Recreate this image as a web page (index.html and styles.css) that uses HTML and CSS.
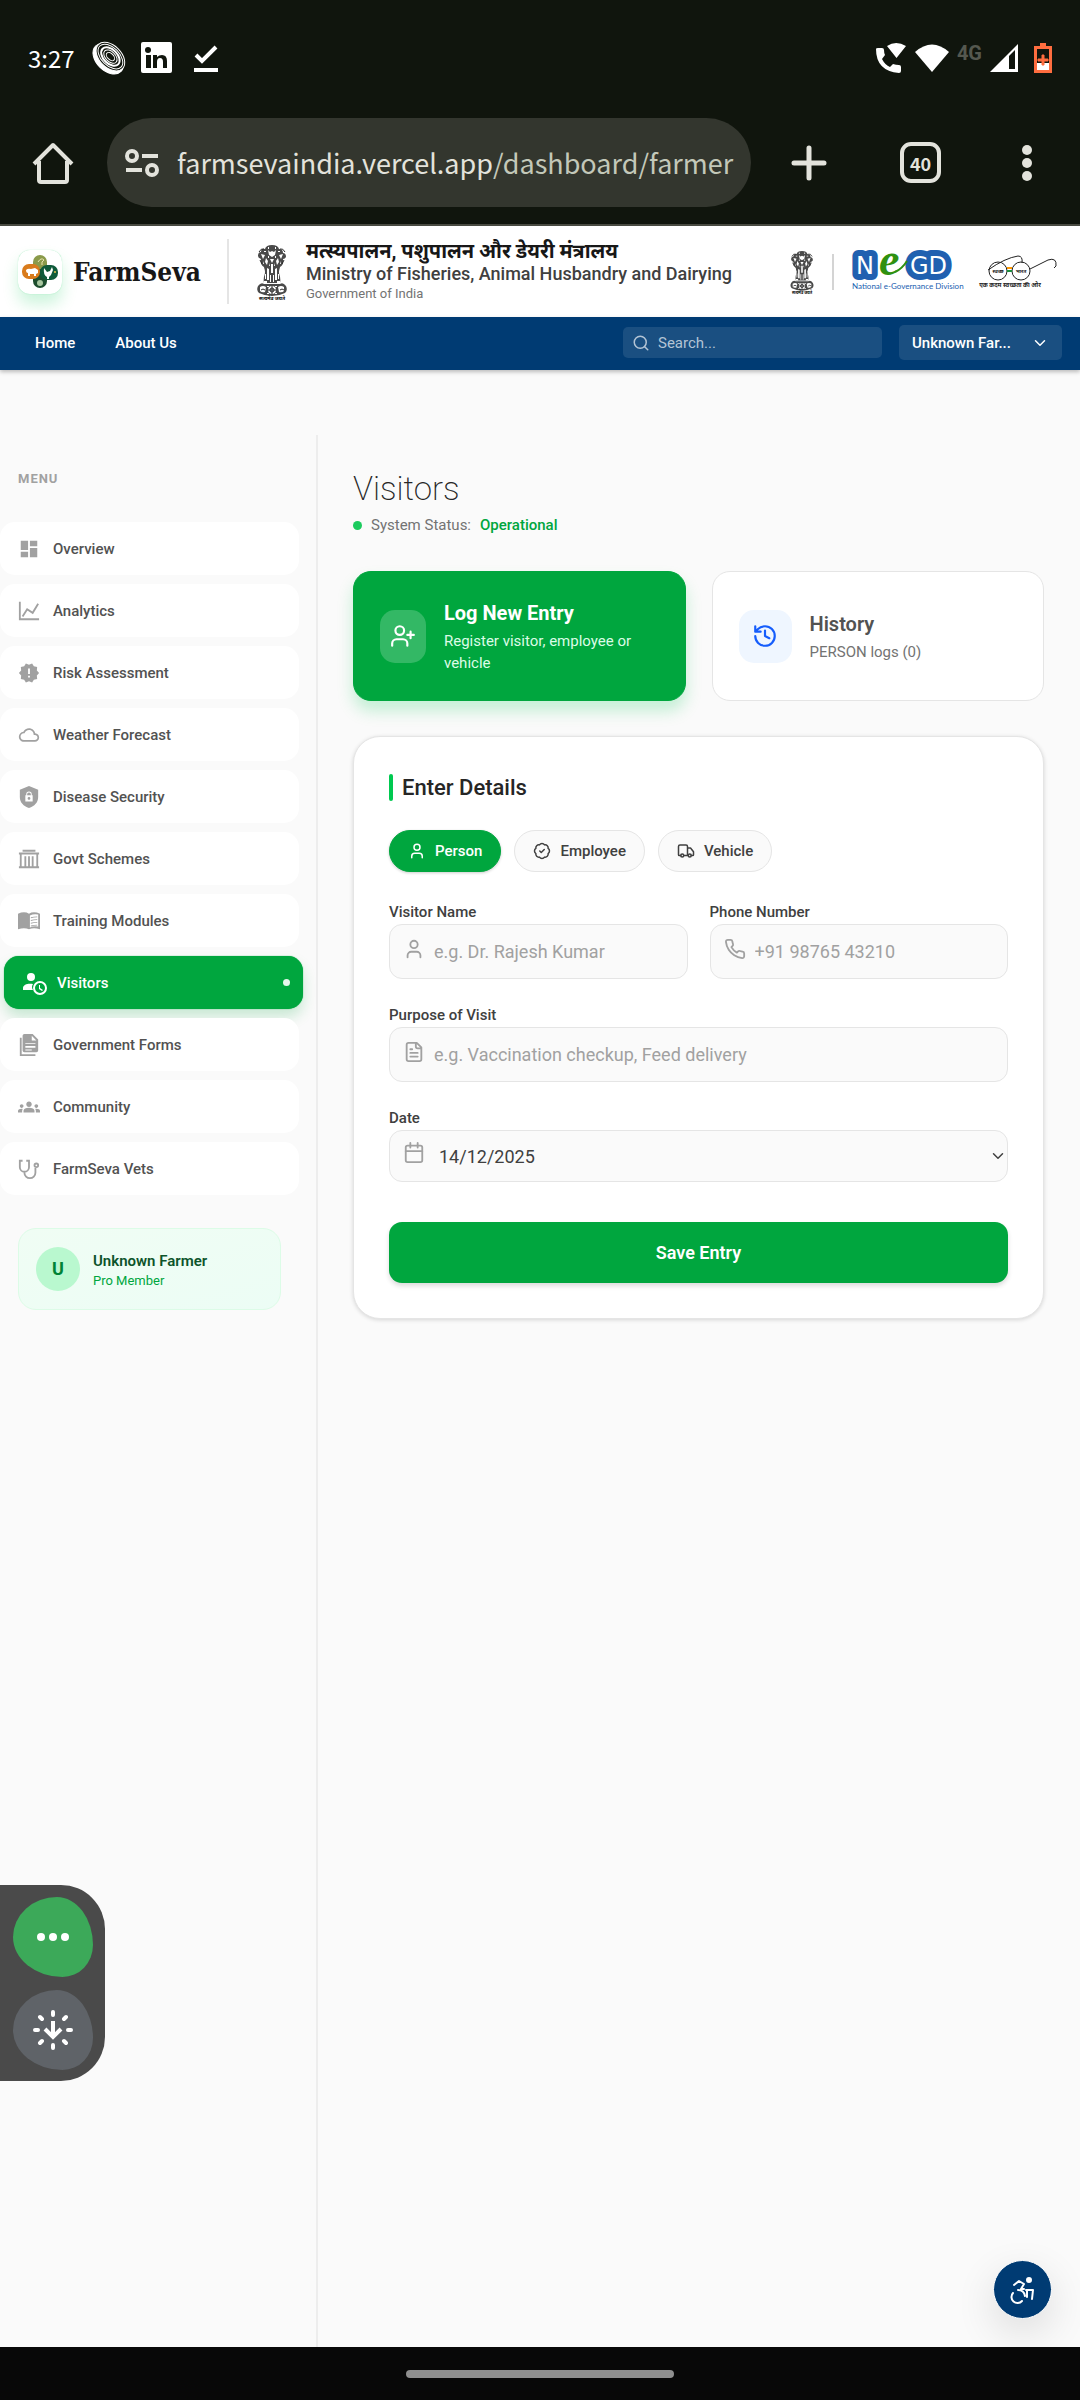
FILE: index.html
```html
<!DOCTYPE html>
<html lang="en">
<head>
    <meta charset="UTF-8">
    <meta name="viewport" content="width=device-width, initial-scale=1.0">
    <title>FarmSeva - Visitors</title>
    <link rel="stylesheet" href="styles.css">
</head>
<body>

    <!-- icons used more than once -->
    <svg class="sprite" aria-hidden="true">
        <symbol id="i-user" viewBox="0 0 24 24">
            <path d="M19 21v-2a4 4 0 0 0-4-4H9a4 4 0 0 0-4 4v2"/><circle cx="12" cy="7" r="4"/>
        </symbol>
        <symbol id="i-chevron" viewBox="0 0 24 24"><path d="m6 9 6 6 6-6"/></symbol>
        <symbol id="i-emblem" viewBox="0 0 36 56">
            <g fill="#4a4a4a">
                <path d="M11 5q1-4 7-4t7 4q4 0 4 4 3 0 3 4-1 2-3 2 1 6-3 8l-1 6q2 6 1 10H10q-1-4 1-10l-1-6q-4-2-3-8-3-1-3-3 0-4 3-4 0-4 4-3z"/>
                <path d="M4 42q3-4 6-2h16q3-2 6 2 2 4-1 7-6 3-13 3T5 49q-3-3-1-7z"/>
            </g>
            <g fill="#fff">
                <path d="M14 6l2 2 2-1 2 1 2-2-1 5-3 2-3-2zM7 10l4 1-2 4zM29 10l-4 1 2 4zM12 14l2 3-1 4-2-3zM24 14l-2 3 1 4 2-3zM16 15h4l-2 4zM17 20h2v9h-2zM13 24l2 1v11h-2zM21 25l2-1v12h-2zM16 31h1v7h-1zM19 31h1v7h-1zM10 24l1 4-1 1zM26 24l-1 4 1 1zM10 37h3v2h-3zM23 37h3v2h-3z"/>
                <path d="M14 3h1v2h-1zM21 3h1v2h-1zM10 7h2v1h-2zM24 7h2v1h-2zM14 12h1v2h-1zM21 12h1v2h-1zM9 17l1 3H9zM27 17l-1 3h1zM15 19l1 3h-1zM20 19l1 3h-1zM11 30h1v5h-1zM24 30h1v5h-1zM13 42h2v1h-2zM21 42h2v1h-2zM13 49h2v1h-2zM21 49h2v1h-2z"/>
                <circle cx="18" cy="46" r="4"/><path d="M6 43q3-2 6 0l-1 5q-3 1-5-1zM24 43q3-2 6 0v4q-2 2-5 1z"/>
            </g>
            <g fill="none" stroke="#2b2b2b">
                <circle cx="18" cy="46" r="2"/><path d="M18 42v8M14 46h8M7 46q2-2 4 0M26 46q2-2 4 0"/>
                <path d="M5 8q2-4 5-3M31 8q-2-4-5-3M8 20l-2-4M28 20l2-4"/>
            </g>
            <text x="18" y="56" class="emblem-text">सत्यमेव जयते</text>
        </symbol>
    </svg>

    <header class="device">
        <div class="status-bar">
            <span class="clock">3:27</span>
            <svg class="st-coin" viewBox="0 0 34 34" width="34" height="34">
                <g transform="rotate(45 17 17)" fill="none" stroke="#fff">
                    <ellipse cx="17" cy="18" rx="18" ry="12" fill="#fff"/>
                    <ellipse cx="17" cy="15" rx="17" ry="11" fill="#10150d"/>
                    <ellipse cx="17" cy="15" rx="15" ry="9"/>
                    <ellipse cx="17" cy="15" rx="11" ry="7" stroke-width="2"/>
                    <ellipse cx="17" cy="15" rx="8" ry="5"/>
                    <ellipse cx="17" cy="15" rx="5" ry="3"/>
                </g>
            </svg>
            <svg class="st-in" viewBox="0 0 31 31" width="31" height="31">
                <rect width="31" height="31" rx="2" fill="#fff"/>
                <g fill="#10150d"><circle cx="7" cy="8" r="3"/><path d="M5 13h5v13H5zM12 13h4v2q2-2 5-2 5 0 5 6v7h-4v-6q0-4-3-4t-3 4v6h-4z"/></g>
            </svg>
            <svg viewBox="0 0 24 28" width="24" height="28" fill="none" stroke="#fff" stroke-width="4"><path d="M2 11l6 6L22 3M0 26h24"/></svg>
            <div class="status-right">
                <svg viewBox="0 0 32 32" width="32" height="32" fill="#fff">
                    <path d="M1 7q0-1 2-1h4q2 0 2 2 0 3 1 5l-3 4q3 6 8 8l3-3q3 1 6 1 2 0 2 2v4q0 2-2 2Q1 29 1 7zM12 4q9-6 19 0l-9.500 12z"/>
                </svg>
                <svg viewBox="0 0 34 28" width="34" height="28" fill="#fff"><path d="M0 8q17-15 34 0L17 28z"/></svg>
                <span class="net">4G</span>
                <svg viewBox="0 0 28 28" width="28" height="28"><path d="M0 28L28 0v28z" fill="#fff"/><path d="M19 25V12l6-6v19z" fill="#10150d"/></svg>
                <svg class="battery" viewBox="0 0 18 30" width="18" height="30"><path d="M6 0h6v3h6v27H0V3h6z" fill="#ff6d3f"/><path d="M3 6h12v21H3z" fill="#10150d"/><path d="M3 20h12v7H3z" fill="#fff"/><path d="M8 12h2v4h4v2h-4v4H8v-4H4v-2h4z" fill="#ff6d3f" stroke="#ff6d3f"/></svg>
            </div>
        </div>
        <div class="toolbar">
            <button class="tool" aria-label="Home page">
                <svg viewBox="0 0 42 42" width="42" height="42" fill="none" stroke="#e3e3dc" stroke-width="4" stroke-linejoin="round"><path d="M2 22L21 3l19 19M7 19v19q0 2 2 2h24q2 0 2-2V19"/></svg>
            </button>
            <button class="address">
                <svg viewBox="0 0 34 28" width="34" height="28" fill="none" stroke="#e3e3dc" stroke-width="4"><circle cx="7" cy="7" r="5"/><circle cx="27" cy="21" r="5"/><path d="M17 7h16M1 21h16"/></svg>
                <span>farmsevaindia.vercel.app<span class="path">/dashboard/farmer</span></span>
            </button>
            <button class="tool" aria-label="New tab">
                <svg viewBox="0 0 36 36" width="36" height="36" stroke="#e3e3dc" stroke-width="5" stroke-linecap="round"><path d="M18 3v30M3 18h30"/></svg>
            </button>
            <button class="tool tabs">40</button>
            <button class="tool" aria-label="More">
                <svg viewBox="0 0 10 38" width="10" height="38" fill="#e3e3dc"><circle cx="5" cy="6" r="5"/><circle cx="5" cy="19" r="5"/><circle cx="5" cy="32" r="5"/></svg>
            </button>
        </div>
    </header>

    <header class="site-header">
        <a class="brand" href="#">
            <span class="brand-logo">
                <svg viewBox="0 0 36 34" width="36" height="34">
                    <rect x="11" y="0" width="14" height="20" rx="7" fill="#8a9a4a"/>
                    <rect x="11" y="14" width="14" height="19" rx="7" fill="#1d4d2d"/>
                    <rect x="0" y="9" width="18" height="15" rx="7" fill="#d97b1c"/>
                    <rect x="18" y="10" width="18" height="15" rx="7" fill="#0f5a3a"/>
                    <path d="M4 15q2-2 5-1l4-1 3 2v3l-2 1v2h-2v-2H8v2H6v-3q-2 0-2-3zM22 13l3 4 3-1 2-4 1 3-2 5-2 2v2h-2v-2q-4-2-3-9z" fill="#fff"/>
                    <path d="M16 7q3-5 6-2l-2 2v3" fill="none" stroke="#e8e3b0"/><circle cx="18" cy="28" r="3" fill="#a9c7a0"/><circle cx="33" cy="17" r="1" fill="#e3c04a"/>
                </svg>
            </span>
            FarmSeva
        </a>
        <div class="ministry">
            <svg width="36" height="56"><use href="#i-emblem"/></svg>
            <div>
                <p class="ministry-hi" lang="hi">मत्स्यपालन, पशुपालन और डेयरी मंत्रालय</p>
                <p class="ministry-en">Ministry of Fisheries, Animal Husbandry and Dairying</p>
                <p class="ministry-gov">Government of India</p>
            </div>
        </div>
        <div class="partners">
            <svg width="28" height="46"><use href="#i-emblem"/></svg>
            <span class="rule"></span>
            <svg class="negd" viewBox="0 0 110 44" width="110" height="44">
                <text x="5" y="24" class="negd-big">N</text>
                <text x="59" y="24" class="negd-big">GD</text>
                <text x="28" y="25" class="negd-e">e</text>
                <path d="M44 22q7-3 12-11" fill="none" stroke="#2f9110" stroke-width="2"/>
                <text x="1" y="39" class="negd-small">National e-Governance Division</text>
            </svg>
            <svg viewBox="0 0 74 34" width="74" height="34" fill="none" stroke="#222">
                <circle cx="13" cy="16" r="9"/><circle cx="36" cy="16" r="9"/>
                <path d="M3 15Q20 3 33 1q5 0 4 7M45 14L63 5q9-3 8 6l-2 2"/>
                <path d="M22 13h5" stroke="#f90" stroke-width="2"/><path d="M22 16h5" stroke="#1a8f3c" stroke-width="2"/>
                <text x="13" y="18" class="sb-text">स्वच्छ</text><text x="36" y="18" class="sb-text">भारत</text>
                <text x="25" y="32" class="sb-text sb-motto">एक कदम स्वच्छता की ओर</text>
            </svg>
        </div>
    </header>

    <nav class="site-nav">
        <a href="#">Home</a>
        <a href="#">About Us</a>
        <label class="search">
            <svg class="line" viewBox="0 0 24 24" width="18" height="18"><circle cx="11" cy="11" r="8"/><path d="m21 21-4-4"/></svg>
            <input type="search" placeholder="Search..." aria-label="Search">
        </label>
        <button class="account"><span>Unknown Far...</span><svg class="line" width="18" height="18"><use href="#i-chevron"/></svg></button>
    </nav>

    <div class="layout">
        <aside class="sidebar">
            <h2>MENU</h2>
            <nav class="menu">
                <a href="#"><svg viewBox="0 0 24 24"><path d="M3 13h8V3H3v10zm0 8h8v-6H3v6zm10 0h8V11h-8v10zm0-18v6h8V3h-8z"/></svg>Overview</a>
                <a href="#"><svg class="stroke" viewBox="0 0 24 24"><path d="M2 2v19h21M5 18l5-8 6 4 6-10"/></svg>Analytics</a>
                <a href="#"><svg viewBox="0 0 24 24"><path d="M23 12l-2.440-2.780.340-3.680-3.610-.820-1.890-3.180L12 3 8.600 1.540 6.710 4.720l-3.610.810.340 3.680L1 12l2.440 2.780-.340 3.690 3.610.820 1.890 3.180L12 21l3.400 1.460 1.890-3.180 3.610-.820-.340-3.680L23 12zm-10 5h-2v-2h2v2zm0-4h-2V7h2v6z"/></svg>Risk Assessment</a>
                <a href="#"><svg viewBox="-1 -1 26 26"><path d="M19.350 10.040C18.670 6.590 15.640 4 12 4 9.110 4 6.600 5.640 5.350 8.040 2.340 8.360 0 10.910 0 14c0 3.310 2.690 6 6 6h13c2.760 0 5-2.240 5-5 0-2.640-2.050-4.780-4.650-4.960zM19 18H6c-2.210 0-4-1.790-4-4s1.790-4 4-4h.710C7.370 7.690 9.480 6 12 6c3.040 0 5.500 2.460 5.500 5.500v.500H19c1.660 0 3 1.340 3 3s-1.340 3-3 3z"/></svg>Weather Forecast</a>
                <a href="#"><svg viewBox="0 0 24 24"><path fill-rule="evenodd" d="M12 0l10 4v8c0 6-4 10-10 12C6 22 2 18 2 12V4zM8 10v7h8v-7h-1V9a3 3 0 0 0-6 0v1zm2 0V9a2 2 0 0 1 4 0v1zM12 12a1 1 0 0 1 0 3 1 1 0 0 1 0-3z"/></svg>Disease Security</a>
                <a href="#"><svg class="stroke" viewBox="0 0 24 24"><path d="M5 3h14M1 6h22M1 21h22M3 6v15M8 9v12M12 9v12M16 9v12M21 6v15"/></svg>Govt Schemes</a>
                <a href="#"><svg viewBox="0 0 24 24"><path fill-rule="evenodd" d="M0 4q7-3 12 0 5-3 12 0v17q-7-2-12 0-5-2-12 0zM13 6v13q4-2 9-1V5q-5-1-9 1z"/><path d="M14 8q3-1 7-1v1q-4 0-7 1zM14 11q3-1 7-1v1q-4 0-7 1zM14 14q3-1 7-1v1q-4 0-7 1zM14 17q3-1 7-1v1q-4 0-7 1z"/></svg>Training Modules</a>
                <a href="#" class="active"><svg viewBox="0 0 24 24"><circle cx="9" cy="6" r="4"/><path d="M11 19H1v-2c0-4 6-5 10-4q-2 3 0 6z"/><path fill-rule="evenodd" d="M18 10a7 7 0 1 0 0 14 7 7 0 0 0 0-14zm0 2a5 5 0 1 1 0 10 5 5 0 0 1 0-10z"/><path d="M17 14h1v3l3 2-1 1-3-2z"/></svg>Visitors</a>
                <a href="#"><svg viewBox="0 0 24 24"><path d="M2 4v20h17v-2H4V4z"/><path fill-rule="evenodd" d="M7 0h9l6 6v12q0 2-2 2H7q-2 0-2-2V2q0-2 2-2zM15 2v5h5zM8 10v1h11v-1zM8 13v2h11v-2zM8 17v1h7v-1z"/></svg>Government Forms</a>
                <a href="#"><svg viewBox="0 0 24 24"><path d="M12 12.750c1.630 0 3.070.390 4.240.900 1.080.480 1.760 1.560 1.760 2.730V18H6v-1.610c0-1.180.680-2.260 1.760-2.730 1.170-.520 2.610-.910 4.240-.910zM4 13c1.100 0 2-.900 2-2s-.900-2-2-2-2 .900-2 2 .900 2 2 2zm1.130 1.100c-.370-.060-.740-.100-1.130-.100-.990 0-1.930.210-2.780.580A2.010 2.010 0 0 0 0 16.430V18h4.500v-1.610c0-.830.230-1.610.630-2.290zM20 13c1.100 0 2-.900 2-2s-.900-2-2-2-2 .900-2 2 .900 2 2 2zm4 3.430c0-.810-.480-1.530-1.220-1.850A6.950 6.950 0 0 0 20 14c-.390 0-.760.040-1.130.100.400.680.630 1.460.630 2.290V18H24v-1.570zM12 6c1.660 0 3 1.340 3 3s-1.340 3-3 3-3-1.340-3-3 1.340-3 3-3z"/></svg>Community</a>
                <a href="#"><svg class="stroke" viewBox="0 0 24 24"><path d="M5 3H2v7a5 5 0 0 0 10 0V3H9M7 15v1a6 6 0 0 0 12 0v-5"/><circle cx="20" cy="8" r="2"/></svg>FarmSeva Vets</a>
            </nav>
            <div class="profile">
                <span class="avatar">U</span>
                <div>
                    <p class="profile-name">Unknown Farmer</p>
                    <p class="profile-plan">Pro Member</p>
                </div>
            </div>
        </aside>

        <main class="content">
            <h1>Visitors</h1>
            <p class="status"><span class="status-dot"></span>System Status: <strong>Operational</strong></p>

            <div class="actions">
                <button class="action action-primary">
                    <span class="action-icon"><svg class="line" viewBox="0 0 24 24" width="26" height="26"><path d="M16 21v-2a4 4 0 0 0-4-4H6a4 4 0 0 0-4 4v2M19 8v6M22 11h-6"/><circle cx="9" cy="7" r="4"/></svg></span>
                    <span><b>Log New Entry</b><small>Register visitor, employee or vehicle</small></span>
                </button>
                <button class="action">
                    <span class="action-icon"><svg class="line" viewBox="0 0 24 24" width="26" height="26"><path d="M3 12a9 9 0 1 0 9-9 9.750 9.750 0 0 0-6.740 2.740L3 8M3 3v5h5M12 7v5l4 2"/></svg></span>
                    <span><b>History</b><small>PERSON logs (0)</small></span>
                </button>
            </div>

            <form class="panel">
                <h2>Enter Details</h2>
                <div class="types">
                    <button type="button" class="selected"><svg class="line" width="18" height="18"><use href="#i-user"/></svg>Person</button>
                    <button type="button"><svg class="line" viewBox="0 0 24 24" width="18" height="18"><path d="M3.850 8.620a4 4 0 0 1 4.780-4.770 4 4 0 0 1 6.740 0 4 4 0 0 1 4.780 4.780 4 4 0 0 1 0 6.740 4 4 0 0 1-4.770 4.780 4 4 0 0 1-6.750 0 4 4 0 0 1-4.780-4.770 4 4 0 0 1 0-6.760z"/><path d="m9 12 2 2 4-4"/></svg>Employee</button>
                    <button type="button"><svg class="line" viewBox="0 0 24 24" width="18" height="18"><path d="M14 18V6a2 2 0 0 0-2-2H4a2 2 0 0 0-2 2v11a1 1 0 0 0 1 1h2M15 18H9M19 18h2a1 1 0 0 0 1-1v-4l-4-5h-4"/><circle cx="17" cy="18" r="2"/><circle cx="7" cy="18" r="2"/></svg>Vehicle</button>
                </div>
                <div class="fields">
                    <div class="field">
                        <label for="name">Visitor Name</label>
                        <div class="control">
                            <svg class="line" width="22" height="22"><use href="#i-user"/></svg>
                            <input id="name" type="text" placeholder="e.g. Dr. Rajesh Kumar">
                        </div>
                    </div>
                    <div class="field">
                        <label for="phone">Phone Number</label>
                        <div class="control">
                            <svg class="line" viewBox="0 0 24 24" width="22" height="22"><path d="M22 16.920v3a2 2 0 0 1-2.180 2 19.790 19.790 0 0 1-8.630-3.070 19.500 19.500 0 0 1-6-6 19.790 19.790 0 0 1-3.070-8.670A2 2 0 0 1 4.110 2h3a2 2 0 0 1 2 1.720 12.840 12.840 0 0 0 .700 2.810 2 2 0 0 1-.450 2.110L8.090 9.910a16 16 0 0 0 6 6l1.270-1.270a2 2 0 0 1 2.110-.450 12.840 12.840 0 0 0 2.810.700A2 2 0 0 1 22 16.920z"/></svg>
                            <input id="phone" type="tel" placeholder="+91 98765 43210">
                        </div>
                    </div>
                    <div class="field wide">
                        <label for="purpose">Purpose of Visit</label>
                        <div class="control">
                            <svg class="line" viewBox="0 0 24 24" width="22" height="22"><path d="M15 2H6a2 2 0 0 0-2 2v16a2 2 0 0 0 2 2h12a2 2 0 0 0 2-2V7zM14 2v4a2 2 0 0 0 2 2h4M10 9H8M16 13H8M16 17H8"/></svg>
                            <input id="purpose" type="text" placeholder="e.g. Vaccination checkup, Feed delivery">
                        </div>
                    </div>
                    <div class="field wide">
                        <label for="date">Date</label>
                        <div class="control control-date">
                            <svg class="line" viewBox="0 0 24 24" width="22" height="22"><path d="M8 1v5M16 1v5M3 10h18"/><rect x="3" y="4" width="18" height="18" rx="2"/></svg>
                            <select id="date"><option>14/12/2025</option></select>
                            <svg class="line arrow" width="18" height="18"><use href="#i-chevron"/></svg>
                        </div>
                    </div>
                </div>
                <button type="submit" class="save">Save Entry</button>
            </form>
        </main>
    </div>

    <button class="a11y" aria-label="Accessibility options">
        <svg viewBox="0 0 24 24" width="24" height="24" fill="none" stroke="#fff" stroke-width="2" stroke-linecap="round" stroke-linejoin="round">
            <circle cx="18" cy="2" r="2" fill="#fff"/><path d="M3 7l5-4 5 3-3 5h3M15 12h7l-1 9M16 12v7M2 15a6 6 0 0 0 9 8M7 12q6 0 7 6"/>
        </svg>
    </button>

    <div class="float-menu">
        <button class="blob blob-green" aria-label="More actions">
            <svg viewBox="0 0 32 8" width="32" height="8" fill="#fff"><circle cx="4" cy="4" r="4"/><circle cx="16" cy="4" r="4"/><circle cx="28" cy="4" r="4"/></svg>
        </button>
        <button class="blob" aria-label="Dim screen">
            <svg viewBox="0 0 42 42" width="42" height="42" fill="none" stroke="#fff" stroke-width="4"><path d="M21 12v16M13 20l8 8 8-8"/><path stroke-linecap="round" d="M21 3v3M21 36v3M3 21h3M36 21h3M8 8l2 2M32 10l2-2M8 34l2-2M32 32l2 2"/></svg>
        </button>
    </div>

    <div class="gesture-bar"><span></span></div>

</body>
</html>
```

FILE: styles.css
```css
* {
    box-sizing: border-box;
}

body {
    font-family: Roboto, "Noto Sans", sans-serif;
    font-size: 15px;
    color: #262626;
    background-color: #fafafa;
    margin: 0;
    min-height: 100vh;
    display: flex;
    flex-direction: column;
    position: relative;
}

h1, h2, p {
    margin: 0;
}

a {
    color: inherit;
    text-decoration: none;
}

button, input, select {
    font: inherit;
    color: inherit;
    border: none;
    background: none;
    margin: 0;
    padding: 0;
}

button {
    cursor: pointer;
}

svg {
    flex: none;
    overflow: visible;
}

.sprite {
    position: absolute;
    width: 0;
    height: 0;
}

.line {
    fill: none;
    stroke: currentColor;
    stroke-width: 2;
    stroke-linecap: round;
    stroke-linejoin: round;
}

/* phone status bar and browser toolbar */
.device {
    background-color: #10150d;
    border-bottom: 2px solid #484a41;
    font-family: "Noto Sans CJK SC", "Noto Sans", sans-serif;
    color: #e3e3dc;
}

.status-bar {
    display: flex;
    align-items: center;
    height: 115px;
    padding: 0 28px;
}

.clock {
    font-size: 24px;
    color: #fff;
}

.st-coin {
    margin: 0 15px 0 17px;
}

.st-in {
    margin-right: 22px;
}

.status-right {
    margin-left: auto;
    display: flex;
    align-items: center;
    gap: 8px;
}

.net {
    font: bold 20px Roboto, sans-serif;
    color: #55584f;
    padding-bottom: 10px;
}

.battery {
    margin-left: 8px;
}

.toolbar {
    display: flex;
    align-items: center;
    padding: 3px 48px 17px 32px;
}

.tool {
    display: flex;
    flex: none;
    align-items: center;
    justify-content: center;
}

.address {
    flex: 1;
    min-width: 0;
    height: 89px;
    margin: 0 40px 0 33px;
    padding: 0 18px;
    border-radius: 45px;
    background-color: #33362e;
    display: flex;
    align-items: center;
    gap: 18px;
    font-size: 27px;
    white-space: nowrap;
}

.path {
    color: #c3c8b9;
}

.tabs {
    width: 41px;
    height: 41px;
    margin: 0 81px 0 73px;
    border: 4px solid #e3e3dc;
    border-radius: 11px;
    font-size: 18px;
    font-weight: bold;
}

/* site header */
.site-header {
    display: flex;
    align-items: center;
    height: 91px;
    padding: 0 21px 0 18px;
    background-color: #fff;
}

.brand {
    display: flex;
    align-items: center;
    gap: 11px;
    padding-right: 26px;
    height: 65px;
    border-right: 2px solid #e5e5e5;
    font: bold 26px "DejaVu Serif Condensed", "Liberation Serif", serif;
    color: #171717;
}

.brand-logo {
    display: flex;
    align-items: center;
    justify-content: center;
    width: 44px;
    height: 44px;
    border-radius: 12px;
    background-color: #fff;
    box-shadow: 0 10px 16px rgba(0, 201, 80, 0.2), 0 0 1px rgba(0, 201, 80, 0.4);
}

.ministry {
    display: flex;
    align-items: center;
    gap: 16px;
    padding-left: 25px;
    white-space: nowrap;
}

.ministry-hi {
    font-size: 20px;
    font-weight: bold;
    line-height: 24px;
    color: #171717;
}

.ministry-en {
    font-size: 18px;
    font-weight: 500;
    line-height: 22px;
    color: #404040;
}

.ministry-gov {
    font-size: 13px;
    line-height: 18px;
    padding-bottom: 2px;
    color: #737373;
}

.emblem-text {
    font-size: 5px;
    font-weight: bold;
    text-anchor: middle;
}

.partners {
    margin-left: auto;
    display: flex;
    align-items: center;
}

.rule {
    width: 2px;
    height: 36px;
    margin: 0 17px 0 16px;
    background-color: #d4d4d4;
}

.negd {
    margin-right: 24px;
}

.negd-big {
    font: 24px "DejaVu Sans", sans-serif;
    fill: #fff;
    stroke: #2060b0;
    stroke-width: 12px;
    stroke-linejoin: round;
    paint-order: stroke;
}

.negd-e {
    font: italic bold 46px "Liberation Serif", serif;
    fill: #2f9110;
}

.negd-small {
    font: 8px Lato, sans-serif;
    fill: #2060b0;
}

.sb-text {
    font-size: 5px;
    font-weight: bold;
    text-anchor: middle;
    fill: #222;
    stroke: none;
}

.sb-motto {
    font-size: 6px;
}

/* blue navigation */
.site-nav {
    display: flex;
    align-items: center;
    height: 53px;
    padding: 0 18px 2px 35px;
    background-color: #003b73;
    color: #fff;
    font-weight: 500;
    box-shadow: 0 2px 4px rgba(0, 0, 0, 0.25);
}

.site-nav a {
    margin-right: 40px;
}

.search {
    display: flex;
    align-items: center;
    gap: 8px;
    width: 259px;
    height: 31px;
    margin-left: auto;
    padding: 0 9px;
    border-radius: 5px;
    background-color: #1a4f81;
    color: #b3c4d5;
    font-weight: 400;
}

.search input {
    flex: 1;
    min-width: 0;
}

.search input::placeholder {
    color: #b3c4d5;
}

.account {
    display: flex;
    align-items: center;
    justify-content: space-between;
    width: 163px;
    height: 35px;
    margin-left: 17px;
    padding: 0 13px;
    border-radius: 5px;
    background-color: #1a4f81;
}

/* layout */
.layout {
    flex: 1;
    display: flex;
    padding-top: 65px;
}

.sidebar {
    width: 318px;
    flex: none;
    border-right: 2px solid #ededed;
}

.sidebar h2 {
    font-size: 13px;
    line-height: 20px;
    letter-spacing: 1px;
    color: #a1a1a1;
    padding: 34px 18px 33px;
}

.menu {
    display: grid;
    gap: 9px;
    width: 299px;
}

.menu a {
    display: flex;
    align-items: center;
    gap: 13px;
    height: 53px;
    padding: 0 18px;
    border-radius: 15px;
    background-color: #fff;
    color: #525252;
    font-weight: 500;
}

.menu svg {
    width: 22px;
    height: 22px;
    fill: #a1a1a1;
}

.menu .stroke {
    fill: none;
    stroke: #a1a1a1;
    stroke-width: 2;
}

.menu .active {
    margin: 0 -4px 0 4px;
    background-color: #00a63e;
    color: #fff;
    box-shadow: 0 8px 14px rgba(0, 166, 62, 0.2), 0 0 1px #00a63e;
}

.menu .active svg {
    width: 24px;
    height: 24px;
    margin-right: -2px;
    fill: #fff;
}

.menu .active::after {
    content: "";
    width: 7px;
    height: 7px;
    margin: 0 -5px 0 auto;
    border-radius: 50%;
    background-color: #e6f6ec;
}

.profile {
    display: flex;
    align-items: center;
    gap: 13px;
    height: 82px;
    margin: 33px 35px 0 18px;
    padding: 0 17px;
    border: 1px solid #dcfce7;
    border-radius: 18px;
    background: linear-gradient(to bottom right, #f0fdf4, #ecfdf5);
}

.avatar {
    width: 44px;
    height: 44px;
    border-radius: 50%;
    background-color: #b9f8cf;
    color: #008236;
    font-size: 18px;
    font-weight: bold;
    line-height: 43px;
    text-align: center;
}

.profile-name {
    line-height: 22px;
    font-weight: 600;
    color: #0d542b;
}

.profile-plan {
    font-size: 13px;
    line-height: 17px;
    color: #00a63e;
}

/* content */
.content {
    flex: 1;
    min-width: 0;
    padding: 35px 36px 35px 35px;
}

h1 {
    font-size: 33px;
    font-weight: 200;
    line-height: 38px;
}

.status {
    display: flex;
    align-items: center;
    gap: 9px;
    line-height: 22px;
    margin: 6px 0 35px;
    color: #737373;
}

.status strong {
    font-weight: 500;
    color: #00a63e;
}

.status-dot {
    width: 9px;
    height: 9px;
    border-radius: 50%;
    background-color: #1ccb5e;
}

.actions {
    display: grid;
    grid-template-columns: 1fr 1fr;
    gap: 26px;
    margin-bottom: 35px;
}

.action {
    display: flex;
    align-items: center;
    gap: 18px;
    min-height: 130px;
    padding: 26px;
    border: 1px solid #e5e5e5;
    border-radius: 18px;
    background-color: #fff;
    text-align: left;
    color: #525252;
}

.action b {
    display: block;
    font-size: 20px;
    font-weight: 600;
    line-height: 28px;
    margin-bottom: 3px;
}

.action small {
    display: block;
    font-size: 15px;
    line-height: 22px;
    color: #737373;
}

.action-icon {
    display: flex;
    align-items: center;
    justify-content: center;
    flex: none;
    width: 53px;
    height: 53px;
    border-radius: 15px;
    background-color: #eff6ff;
    color: #155dfc;
}

.action-primary {
    border-color: #00a63e;
    background-color: #00a63e;
    color: #fff;
    box-shadow: 0 10px 16px rgba(0, 201, 80, 0.22);
}

.action-primary b {
    font-weight: bold;
}

.action-primary small {
    color: #dcfce7;
}

.action-primary .action-icon {
    width: 46px;
    background-color: #33b865;
    color: #fff;
}

.panel {
    padding: 35px;
    border: 1px solid #e5e5e5;
    border-radius: 27px;
    background-color: #fff;
    box-shadow: 0 1px 4px rgba(0, 0, 0, 0.15);
}

.panel h2 {
    display: flex;
    align-items: center;
    gap: 9px;
    font-size: 22px;
    font-weight: 500;
    line-height: 31px;
    margin-bottom: 27px;
}

.panel h2::before {
    content: "";
    width: 4px;
    height: 27px;
    border-radius: 4px;
    background-color: #00c950;
}

.types {
    display: flex;
    gap: 13px;
    margin-bottom: 29px;
}

.types button {
    display: flex;
    align-items: center;
    gap: 9px;
    height: 42px;
    padding: 0 18px;
    border: 1px solid #e5e5e5;
    border-radius: 21px;
    background-color: #fafafa;
    color: #404040;
    font-weight: 500;
}

.types .selected {
    border-color: #00a63e;
    background-color: #00a63e;
    color: #fff;
    box-shadow: 0 1px 3px rgba(0, 0, 0, 0.2);
}

.fields {
    display: grid;
    grid-template-columns: 1fr 1fr;
    gap: 25px 22px;
}

.wide {
    grid-column: 1 / -1;
}

.field label {
    display: block;
    font-weight: 500;
    line-height: 22px;
    margin-bottom: 1px;
    color: #404040;
}

.control {
    display: flex;
    align-items: center;
    gap: 9px;
    height: 55px;
    padding: 0 13px;
    border: 1px solid #e5e5e5;
    border-radius: 13px;
    background-color: #fafafa;
    color: #a1a1a1;
    font-size: 18px;
}

.control .line {
    margin-bottom: 6px;
}

.control input,
.control select {
    flex: 1;
    min-width: 0;
    color: #404040;
    appearance: none;
}

.control input::placeholder {
    color: #a1a1a1;
}

.control-date {
    height: 52px;
    padding-right: 0;
}

.control-date select {
    padding-left: 5px;
}

.control .arrow {
    margin: 0;
    color: #404040;
}

.save {
    display: block;
    width: 100%;
    height: 61px;
    margin-top: 40px;
    border-radius: 13px;
    background-color: #00a63e;
    color: #fff;
    font-size: 18px;
    font-weight: 600;
    box-shadow: 0 3px 5px rgba(0, 0, 0, 0.14);
}

/* floating controls */
.a11y {
    position: absolute;
    right: 28px;
    bottom: 81px;
    width: 59px;
    height: 59px;
    display: flex;
    align-items: center;
    justify-content: center;
    border: 1px solid #fff;
    border-radius: 50%;
    background-color: #003b73;
    box-shadow: 0 14px 40px rgba(0, 0, 0, 0.12);
}

.float-menu {
    position: absolute;
    left: 0;
    bottom: 319px;
    display: grid;
    gap: 13px;
    padding: 12px 12px 11px 13px;
    border-radius: 0 44px 44px 0;
    background-color: #4a4a4a;
}

.blob {
    display: flex;
    align-items: center;
    justify-content: center;
    width: 80px;
    height: 80px;
    border-radius: 55% 45% 38% 62% / 50% 60% 40% 50%;
    background-color: #5f6368;
}

.blob-green {
    background-color: #3ca959;
}

.gesture-bar {
    display: flex;
    align-items: center;
    justify-content: center;
    height: 53px;
    background-color: #080808;
    z-index: 1;
}

.gesture-bar span {
    width: 268px;
    height: 8px;
    border-radius: 4px;
    background-color: #8f8f8f;
}
```
